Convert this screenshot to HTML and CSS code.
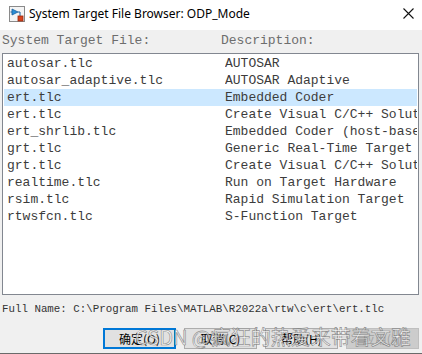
FILE: index.html
```html
<!DOCTYPE html>
<html lang="en">
<head>
    <meta charset="UTF-8">
    <title>System Target File Browser: ODP_Mode</title>
    <link rel="stylesheet" href="styles.css">
</head>
<body>
    <div class="window">
        <header class="titlebar">
            <svg class="app-icon" width="16" height="16" viewBox="0 0 16 16">
                <rect x="0.5" y="0.5" width="15" height="15" fill="#f4f4f4" stroke="#8a8a8a"/>
                <path d="M3 3 L3 9 L9 6 Z" fill="#2c8fd6" stroke="#1a5f9c" stroke-width="0.8"/>
                <path d="M1.5 6 H3 M9 6 H11 V10" stroke="#1a5f9c" stroke-width="1" fill="none"/>
                <rect x="9" y="10" width="5" height="5" fill="#d9441c" stroke="#9b2a0e" stroke-width="0.8"/>
            </svg>
            <span class="title">System Target File Browser: ODP_Mode</span>
            <svg class="close-btn" width="11" height="11" viewBox="0 0 11 11">
                <path d="M0.5 0.5 L10.5 10.5 M10.5 0.5 L0.5 10.5" stroke="#111" stroke-width="1.1"/>
            </svg>
        </header>

        <main class="content">
            <div class="col-header">
                <span class="col-file">System Target File:</span>
                <span class="col-desc">Description:</span>
            </div>

            <ul class="listbox">
                <li class="row"><span class="file">autosar.tlc</span><span class="desc">AUTOSAR</span></li>
                <li class="row"><span class="file">autosar_adaptive.tlc</span><span class="desc">AUTOSAR Adaptive</span></li>
                <li class="row selected"><span class="file">ert.tlc</span><span class="desc">Embedded Coder</span></li>
                <li class="row"><span class="file">ert.tlc</span><span class="desc">Create Visual C/C++ Solut</span></li>
                <li class="row"><span class="file">ert_shrlib.tlc</span><span class="desc">Embedded Coder (host-base</span></li>
                <li class="row"><span class="file">grt.tlc</span><span class="desc">Generic Real-Time Target</span></li>
                <li class="row"><span class="file">grt.tlc</span><span class="desc">Create Visual C/C++ Solut</span></li>
                <li class="row"><span class="file">realtime.tlc</span><span class="desc">Run on Target Hardware</span></li>
                <li class="row"><span class="file">rsim.tlc</span><span class="desc">Rapid Simulation Target</span></li>
                <li class="row"><span class="file">rtwsfcn.tlc</span><span class="desc">S-Function Target</span></li>
            </ul>

            <p class="fullname">Full Name: C:\Program Files\MATLAB\R2022a\rtw\c\ert\ert.tlc</p>

            <div class="buttons">
                <button class="btn default">确定(O)</button>
                <button class="btn">取消(C)</button>
                <button class="btn">帮助(H)</button>
                <button class="btn" disabled>应用(A)</button>
                <div class="watermark">CSDN @疯狂的热爱来带着文雅</div>
            </div>
        </main>
    </div>
</body>
</html>
```

FILE: styles.css
```css
:root {
    --face-color: #f0f0f0;
    --list-border: #828790;
    --text-color: #3c3c3c;
    --header-text: #6d6d6d;
    --select-color: #cce8ff;
    --button-face: #e1e1e1;
    --button-border: #adadad;
    --focus-color: #0078d7;
}

html, body {
    margin: 0;
    padding: 0;
}

body {
    font-family: "Noto Sans", "Liberation Sans", sans-serif;
    background-color: var(--face-color);
}

.window {
    width: 422px;
    height: 354px;
    display: flex;
    flex-direction: column;
    overflow: hidden;
    box-sizing: border-box;
    border-bottom: 1px solid #6a6a6a;
}

/* Title bar */
.titlebar {
    height: 30px;
    flex-shrink: 0;
    background-color: #ffffff;
    display: flex;
    align-items: center;
    padding: 0 8px 0 9px;
}
.app-icon { flex-shrink: 0; margin-top: -2px; }
.title {
    margin-left: 4px;
    font-size: 12px;
    color: #000;
    flex-grow: 1;
    margin-top: -3px;
}
.close-btn { margin-top: -4px; }

/* Content */
.content {
    flex-grow: 1;
    display: flex;
    flex-direction: column;
    padding: 0 3px 0 2px;
    font-family: "Liberation Mono", "Courier New", monospace;
    font-size: 13px;
}

.col-header {
    display: flex;
    height: 17px;
    line-height: 17px;
    margin-top: 2px;
    color: var(--header-text);
}
.col-file { width: 219px; }

.listbox {
    list-style: none;
    margin: 4px 0 0 0;
    padding: 1px;
    height: 238px;
    box-sizing: content-box;
    background-color: #ffffff;
    border: 1px solid var(--list-border);
    overflow: hidden;
}

.row {
    display: flex;
    height: 17px;
    line-height: 17px;
    padding-left: 3px;
    color: var(--text-color);
    white-space: nowrap;
}
.row.selected { background-color: var(--select-color); }
.row .file { width: 218px; flex-shrink: 0; }
.row .desc { overflow: hidden; }

.fullname {
    margin: 6px 0 0 0;
    height: 16px;
    line-height: 16px;
    font-size: 10.8px;
    color: #333;
    white-space: nowrap;
}

/* Buttons */
.buttons {
    position: relative;
    display: flex;
    justify-content: flex-end;
    gap: 8px;
    margin-top: 11px;
}
.btn {
    width: 73px;
    height: 21px;
    padding: 0;
    background-color: var(--button-face);
    border: 1px solid var(--button-border);
    font-family: "Noto Sans CJK SC", sans-serif;
    font-size: 12px;
    color: #000;
    line-height: 17px;
}
.btn.default {
    border: 2px solid var(--focus-color);
}
.btn:disabled {
    background-color: #cccccc;
    border-color: #bfbfbf;
    color: #a0a0a0;
}

.watermark {
    position: absolute;
    left: 133px;
    top: -5px;
    font-family: "Noto Sans CJK SC", sans-serif;
    font-size: 20px;
    line-height: 28px;
    color: rgba(255, 255, 255, 0.7);
    -webkit-text-stroke: 0.7px rgba(80, 80, 80, 0.6);
    white-space: nowrap;
    pointer-events: none;
}
```
